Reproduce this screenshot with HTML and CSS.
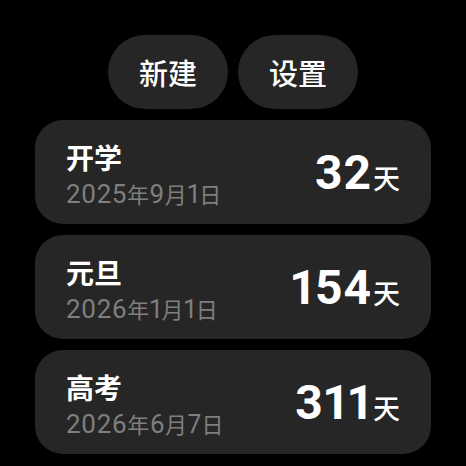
FILE: index.html
```html
<!DOCTYPE html>
<html lang="zh">
<head>
<meta charset="utf-8">
<link rel="stylesheet" href="styles.css">
</head>
<body>
<div class="screen">
  <div class="actions">
    <div class="btn">新建</div>
    <div class="btn">设置</div>
  </div>
  <div class="list">
    <div class="card">
      <div class="info">
        <div class="title">开学</div>
        <div class="date">2025<span class="cj">年</span>9<span class="cj">月</span>1<span class="cj">日</span></div>
      </div>
      <div class="count"><span class="num">32</span><span class="unit">天</span></div>
    </div>
    <div class="card">
      <div class="info">
        <div class="title">元旦</div>
        <div class="date">2026<span class="cj">年</span>1<span class="cj">月</span>1<span class="cj">日</span></div>
      </div>
      <div class="count"><span class="num">154</span><span class="unit">天</span></div>
    </div>
    <div class="card">
      <div class="info">
        <div class="title">高考</div>
        <div class="date">2026<span class="cj">年</span>6<span class="cj">月</span>7<span class="cj">日</span></div>
      </div>
      <div class="count"><span class="num">311</span><span class="unit">天</span></div>
    </div>
  </div>
</div>
</body>
</html>
```
FILE: styles.css
```css
html, body {
  margin: 0;
  padding: 0;
  background: #000;
  width: 466px;
  height: 466px;
  overflow: hidden;
}
.screen {
  display: flex;
  flex-direction: column;
  align-items: center;
  padding-top: 35px;
  font-family: "Noto Sans CJK SC", "Noto Sans", sans-serif;
  color: #fff;
}
.actions {
  display: flex;
  gap: 10px;
}
.btn {
  width: 120px;
  height: 74px;
  border-radius: 37px;
  background: #262626;
  display: flex;
  align-items: center;
  justify-content: center;
  font-size: 29px;
  font-weight: 500;
}
.list {
  margin-top: 11px;
  display: flex;
  flex-direction: column;
  gap: 11px;
}
.card {
  width: 396px;
  height: 104px;
  box-sizing: border-box;
  border-radius: 28px;
  background: #262626;
  display: flex;
  align-items: center;
  justify-content: space-between;
  padding: 0 31px 0 31px;
}
.info {
  display: flex;
  flex-direction: column;
  gap: 4px;
  padding-top: 7px;
}
.title {
  font-size: 28px;
  font-weight: 700;
  line-height: 32px;
}
.date {
  font-family: Roboto, "Noto Sans CJK SC", sans-serif;
  font-size: 26px;
  line-height: 32px;
  color: #7f7f7f;
  white-space: nowrap;
  letter-spacing: 0.5px;
  font-variant-numeric: proportional-nums;
}
.cj {
  font-family: "Noto Sans CJK SC", sans-serif;
  font-size: 22px;
}
.count {
  display: flex;
  align-items: baseline;
}
.num {
  font-family: Roboto, "Noto Sans", sans-serif;
  font-size: 48px;
  font-weight: 700;
  letter-spacing: 1px;
  font-variant-numeric: proportional-nums;
}
.unit {
  font-size: 27px;
  font-weight: 500;
  margin-left: 1px;
}
```
